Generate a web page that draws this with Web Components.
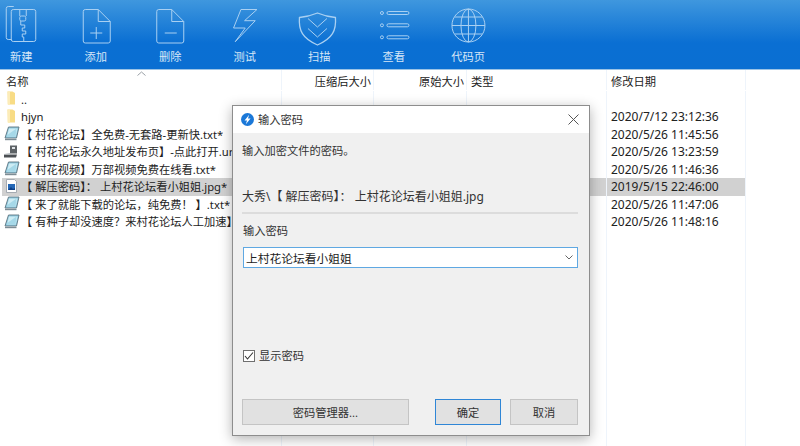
<!DOCTYPE html>
<html lang="zh">
<head>
<meta charset="utf-8">
<title>输入密码</title>
<style>
    html, body { margin: 0; height: 100%; overflow: hidden; }
    body {
        font-family: "Noto Sans", "Noto Sans CJK SC", sans-serif;
        font-size: 11.25px;
        color: #222;
        background: #fff;
    }
    #app { display: flex; flex-direction: column; height: 446px; position: relative; }
</style>
</head>
<body>
<div id="app">
    <app-toolbar>
        <tool-button icon="zip" label="新建"></tool-button>
        <tool-button icon="add" label="添加"></tool-button>
        <tool-button icon="remove" label="删除"></tool-button>
        <tool-button icon="bolt" label="测试"></tool-button>
        <tool-button icon="shield" label="扫描"></tool-button>
        <tool-button icon="list" label="查看"></tool-button>
        <tool-button icon="globe" label="代码页"></tool-button>
    </app-toolbar>
    <file-list>
        <file-row header name="名称" packed="压缩后大小" size="原始大小" kind="类型" date="修改日期"></file-row>
        <file-row icon="folder" name=".."></file-row>
        <file-row icon="folder" name="hjyn" date="2020/7/12 23:12:36"></file-row>
        <file-row icon="txt" name="【 村花论坛】全免费-无套路-更新快.txt*" date="2020/5/26 11:45:56"></file-row>
        <file-row icon="url" name="【 村花论坛永久地址发布页】-点此打开.url*" date="2020/5/26 13:23:59"></file-row>
        <file-row icon="txt" name="【 村花视频】万部视频免费在线看.txt*" date="2020/5/26 11:46:36"></file-row>
        <file-row icon="jpg" selected name="【 解压密码】： 上村花论坛看小姐姐.jpg*" date="2019/5/15 22:46:00"></file-row>
        <file-row icon="txt" name="【 来了就能下载的论坛，纯免费！ 】.txt*" date="2020/5/26 11:47:06"></file-row>
        <file-row icon="txt" name="【 有种子却没速度？来村花论坛人工加速】.txt*" date="2020/5/26 11:48:16"></file-row>
        <file-row filler></file-row>
    </file-list>
    <password-dialog></password-dialog>
</div>

<script>
// drawn in page coordinates, the viewBox below shifts each one onto its button
const TOOL_ICONS = {
    zip: `<path d="M14 6.500h-5.500a2 2 0 0 0-2 2v29a2 2 0 0 0 2 2h3.500"/>
          <rect x="11.500" y="9.500" width="24.500" height="32" rx="2"/>
          <path d="M20 9.500v6.500M26.500 9.500v6.500"/>
          <rect x="20" y="16" width="6" height="5" rx="1.500"/>
          <path d="M21 21v4h4v3h-2.500v3h3.500v3h-3.500v3h1.500v4.500"/>`,
    add: `<path d="M85 9.500h13l12 12v19.500a2 2 0 0 1-2 2H85a2 2 0 0 1-2-2V11.500a2 2 0 0 1 2-2z"/>
          <path d="M98 9.500v12h12M96 27v12M90 33h12"/>`,
    remove: `<path d="M159 9.500h13l12 12v19.500a2 2 0 0 1-2 2h-23a2 2 0 0 1-2-2V11.500a2 2 0 0 1 2-2z"/>
          <path d="M172 9.500v12h12M165 33h12"/>`,
    bolt: `<path d="M240.700 9.500H256.700L244.300 20.700H255L235 41.700L245 28H233.300Z"/>`,
    shield: `<path d="M317.700 13c6 2.500 12 4 18 4.500 1 13-3 21-18 27.500-15-6.500-19-14.500-18-27.500 6-.5 12-2 18-4.500z" stroke-width="1.300"/>
          <path d="M308.200 18.500l9.500 8.500 9.500-8.500M308.200 28.500l9.500 8.500 9.500-8.500"/>`,
    list: `<circle cx="381.700" cy="13" r="1.500"/><rect x="386.700" y="11.500" width="22" height="3" rx="1.500"/>
          <circle cx="381.700" cy="25.300" r="1.500"/><rect x="386.700" y="23.800" width="22" height="3" rx="1.500"/>
          <circle cx="381.700" cy="37.300" r="1.500"/><rect x="386.700" y="35.800" width="22" height="3" rx="1.500"/>`,
    globe: `<circle cx="468.700" cy="25.500" r="16.500"/><ellipse cx="468.700" cy="25.500" rx="7.500" ry="16.500"/>
          <path d="M468.700 9v33M452.200 25.500h33M455 17h27.500M455 34h27.500"/>`
};

const TOOL_VIEW = {
    zip: '-2.750 0 48 50', add: '71.750 0 48 50', remove: '146.250 0 48 50', bolt: '220.750 0 48 50',
    shield: '295.250 0 48 50', list: '369.750 0 48 50', globe: '444.250 0 48 50'
};

class AppToolbar extends HTMLElement {
    constructor() {
        super();
        this.attachShadow({ mode: 'open' });
        this.shadowRoot.innerHTML = `
            <style>
                :host {
                    display: flex;
                    flex: none;
                    height: 70px;
                    overflow: hidden;
                    box-sizing: border-box;
                    background: linear-gradient(#3f97de, #0a6fd3 62%, #0a6fd2);
                    border-bottom: 1px solid #9cc4e6;
                }
                ::slotted(:first-child) { margin-left: -16px; }
            </style>
            <slot></slot>
        `;
    }
}

class ToolButton extends HTMLElement {
    constructor() {
        super();
        this.attachShadow({ mode: 'open' });
    }

    connectedCallback() {
        const icon = this.getAttribute('icon');
        this.shadowRoot.innerHTML = `
            <style>
                :host {
                    display: flex;
                    flex: none;
                    flex-direction: column;
                    align-items: center;
                    width: 74.500px;
                    color: #d5e6f7;
                }
                svg {
                    display: block;
                    width: 48px;
                    height: 50px;
                    fill: none;
                    stroke: #a9d0f2;
                    stroke-width: 1;
                }
                span { line-height: 14px; margin-top: 0; }
            </style>
            <svg viewBox="${TOOL_VIEW[icon]}">${TOOL_ICONS[icon]}</svg>
            <span>${this.getAttribute('label')}</span>
        `;
    }
}

class FileList extends HTMLElement {
    constructor() {
        super();
        this.attachShadow({ mode: 'open' });
        this.shadowRoot.innerHTML = `
            <style>
                :host {
                    display: flex;
                    flex-direction: column;
                    flex: 1;
                    min-height: 0;
                    background: #fff;
                }
            </style>
            <slot></slot>
        `;
    }
}

const FILE_ICONS = {
    folder: `<path d="M5.500 1.500h5l2.500 1.500v11.500h-7z" fill="#f8dc85"/><path d="M5.500 1.500h2.500v13h-2.500z" fill="#fcecb8"/>`,
    txt: `<path d="M6.500 2h10.500l-2.500 11h-11.500z" fill="#8fcbe0" stroke="#5d7480" stroke-width=".9"/>
          <path d="M7 3.500h8.500l-1.800 8h-8.700z" fill="#cdecf4"/>
          <path d="M4.500 10.500l10-7-1 8h-8.500z" fill="#a5d8e8"/>
          <path d="M3 14.500h11.500" stroke="#7d8c94" stroke-width="1.400"/>`,
    url: `<rect x="8" y="2.500" width="7" height="8" fill="#5d6266"/><rect x="10" y="4" width="3" height="2" fill="#dfe3e6"/>
          <path d="M2 11.500h13l-1 3h-12z" fill="#4c5054"/><path d="M2 11l6-1v1.500h-6z" fill="#b9bfc4"/>`,
    jpg: `<path d="M4.500 1.500h8l2 2v11h-10z" fill="#fff" stroke="#a5abb2"/><rect x="6" y="6" width="7" height="6" fill="#2467b6"/><path d="M6 12l3-3 2 2 2-1v2z" fill="#0e3f86"/>`
};

class FileRow extends HTMLElement {
    constructor() {
        super();
        this.attachShadow({ mode: 'open' });
    }

    connectedCallback() {
        const text = (name) => this.getAttribute(name) || '';
        const icon = this.getAttribute('icon');
        const svg = icon ? `<svg viewBox="0 0 18 18">${FILE_ICONS[icon]}</svg>` : '';
        const arrow = this.hasAttribute('header')
            ? `<svg class="sort" viewBox="0 0 9 5"><path d="M.5 4.500l4-3.500 4 3.500" fill="none" stroke="#9aa0a6"/></svg>` : '';
        this.shadowRoot.innerHTML = `
            <style>
                :host {
                    display: grid;
                    grid-template-columns: 282px 92px 93px 140px 139px;
                    height: 17.500px;
                    line-height: 17.500px;
                    position: relative;
                    white-space: nowrap;
                }
                :host([header]) { height: 20px; line-height: 23px; margin-bottom: .500px; }
                :host([filler]) { flex: 1; height: auto; }
                :host([selected]) .cell { background: #d1d1d1; }
                :host([selected]) .name { margin-left: 2px; padding-left: 0; }
                .cell {
                    box-sizing: border-box;
                    overflow: hidden;
                    border-right: 1px solid #eef4fb;
                    padding: 0 2px 0 4px;
                }
                .name { display: flex; align-items: center; padding-left: 2px; }
                :host([header]) .name { padding-left: 6px; align-items: flex-start; }
                svg { display: block; flex: none; width: 18px; height: 18px; }
                .name span { margin-left: 1px; overflow: hidden; }
                :host([header]) .name span { margin-left: 0; }
                .right { text-align: right; }
                .sort { position: absolute; left: 137px; top: 1px; width: 9px; height: 5px; }
                .date { padding-left: 4px; font-size: 12px; }
                :host([header]) .date { font-size: inherit; }
            </style>
            <div class="cell name">${svg}${arrow}<span>${text('name')}</span></div>
            <div class="cell right">${text('packed')}</div>
            <div class="cell right">${text('size')}</div>
            <div class="cell">${text('kind')}</div>
            <div class="cell date">${text('date')}</div>
        `;
    }
}

class PasswordDialog extends HTMLElement {
    constructor() {
        super();
        this.attachShadow({ mode: 'open' });
        this.shadowRoot.innerHTML = `
            <style>
                :host {
                    position: absolute;
                    left: 232px;
                    top: 105px;
                    width: 358px;
                    height: 331px;
                    box-sizing: border-box;
                    display: flex;
                    flex-direction: column;
                    border: 1px solid #8d8d8d;
                    background: #f0f0f0;
                    box-shadow: 0 3px 12px rgba(0, 0, 0, .3);
                    color: #333;
                }
                .title {
                    display: flex;
                    align-items: center;
                    gap: 4px;
                    flex: none;
                    height: 27px;
                    padding: 0 8px;
                    background: #fff;
                }
                .title svg.logo { width: 13px; height: 13px; }
                .title span { flex: 1; margin-top: -2px; }
                .title svg.close { width: 11px; height: 11px; margin-right: 2px; }
                .body {
                    flex: 1;
                    display: flex;
                    flex-direction: column;
                    padding: 9px 11px 10px 9px;
                }
                p { margin: 0; line-height: 18px; }
                .path { margin-top: 28px; font-size: 12px; }
                hr {
                    border: 0;
                    height: 2px;
                    background: #dcdcdc;
                    margin: 6px 0 0 0;
                }
                label { margin-top: 8px; padding-left: 1px; line-height: 18px; }
                .combo {
                    display: flex;
                    align-items: center;
                    justify-content: space-between;
                    height: 21px;
                    box-sizing: border-box;
                    margin: 7px 0 0 1px;
                    padding: 0 4px 0 2px;
                    background: #fff;
                    border: 1px solid #5fa8e2;
                    color: #222;
                    font-size: 11.750px;
                }
                .combo svg { width: 8px; height: 5px; }
                .check {
                    display: flex;
                    align-items: center;
                    gap: 4px;
                    margin: 80px 0 0 1px;
                    line-height: 16px;
                }
                .box {
                    width: 12px;
                    height: 12px;
                    box-sizing: border-box;
                    background: #fff;
                    border: 1px solid #6f6f6f;
                    display: flex;
                    align-items: center;
                    justify-content: center;
                }
                .box svg { width: 10px; height: 10px; }
                .buttons { display: flex; margin-top: auto; }
                button {
                    font: inherit;
                    color: #333;
                    height: 26px;
                    box-sizing: border-box;
                    background: #e1e1e1;
                    border: 1px solid #c4c4c4;
                    padding: 0;
                }
                .manager { width: 167px; }
                .ok { width: 66px; margin-left: 26px; border: 1px solid #2f86d6; }
                .cancel { width: 68px; margin-left: 9px; }
            </style>
            <div class="title">
                <svg class="logo" viewBox="0 0 14 14">
                    <circle cx="7" cy="7" r="7" fill="#1b78d8"/>
                    <path d="M8.800 2L3.800 8h2.700L5.200 12 10.300 6H7.500z" fill="#fff"/>
                </svg>
                <span>输入密码</span>
                <svg class="close" viewBox="0 0 11 11"><path d="M.5.500l10 10M10.500.500l-10 10" stroke="#555" fill="none"/></svg>
            </div>
            <div class="body">
                <p>输入加密文件的密码。</p>
                <p class="path">大秀\\【 解压密码】： 上村花论坛看小姐姐.jpg</p>
                <hr>
                <label>输入密码</label>
                <div class="combo">
                    <span>上村花论坛看小姐姐</span>
                    <svg viewBox="0 0 8 5"><path d="M.5.500l3.500 3.500 3.500-3.500" fill="none" stroke="#666"/></svg>
                </div>
                <div class="check">
                    <span class="box"><svg viewBox="0 0 10 10"><path d="M1 5l2.500 3L9 1.500" fill="none" stroke="#333" stroke-width="1.100"/></svg></span>
                    <span>显示密码</span>
                </div>
                <div class="buttons">
                    <button class="manager">密码管理器...</button>
                    <button class="ok">确定</button>
                    <button class="cancel">取消</button>
                </div>
            </div>
        `;
    }
}

customElements.define('app-toolbar', AppToolbar);
customElements.define('tool-button', ToolButton);
customElements.define('file-list', FileList);
customElements.define('file-row', FileRow);
customElements.define('password-dialog', PasswordDialog);
</script>
</body>
</html>
